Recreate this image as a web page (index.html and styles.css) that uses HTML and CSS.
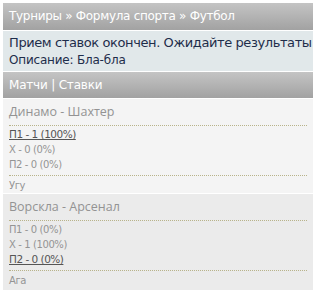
FILE: index.html
```html
<!DOCTYPE html>
<html>

<head>
    <link rel="stylesheet" href="styles.css">
</head>

<body>
    <div class="page">
        <div class="bar crumbs">Турниры &raquo; Формула спорта &raquo; Футбол</div>

        <div class="info">
            <div class="status">Прием ставок окончен. Ожидайте результаты</div>
            <div class="desc">Описание: Бла-бла</div>
        </div>

        <div class="bar tabs">Матчи | Ставки</div>

        <div class="match">
            <div class="match-title">Динамо - Шахтер</div>
            <div class="outcomes">
                <div class="outcome chosen">П1 - 1 (100%)</div>
                <div class="outcome">Х - 0 (0%)</div>
                <div class="outcome">П2 - 0 (0%)</div>
            </div>
            <div class="note">Угу</div>
        </div>

        <div class="match alt">
            <div class="match-title">Ворскла - Арсенал</div>
            <div class="outcomes">
                <div class="outcome">П1 - 0 (0%)</div>
                <div class="outcome">Х - 1 (100%)</div>
                <div class="outcome chosen">П2 - 0 (0%)</div>
            </div>
            <div class="note">Ага</div>
        </div>
    </div>
</body>

</html>
```

FILE: styles.css
```css
body {
    margin: 0;
    padding: 3px 0 0 3px;
    background-color: #fff;
    font-family: "DejaVu Sans", Verdana, sans-serif;
}

.bar {
    color: #fff;
    background: linear-gradient(#c4c4c4, #a2a2a2);
    padding: 0 6px;
}

.crumbs {
    height: 27px;
    line-height: 27px;
    font-size: 12px;
    letter-spacing: -0.3px;
}

.tabs {
    height: 26px;
    line-height: 27px;
    font-size: 12px;
    letter-spacing: -0.2px;
    border-top: 1px solid #fff;
}

.info {
    background-color: #e1e8ea;
    border-top: 1px solid #fff;
    padding: 2px 6px;
    color: #1e2d4a;
}

.status {
    font-size: 13px;
    line-height: 19px;
    letter-spacing: -0.4px;
    white-space: nowrap;
}

.desc {
    font-size: 12px;
    line-height: 17px;
    letter-spacing: -0.2px;
}

.match {
    background-color: #f4f4f4;
    border-top: 1px solid #fff;
    padding: 3px 6px 0;
}

.match.alt {
    background-color: #ebebeb;
    padding-bottom: 2px;
}

.match-title {
    font-family: "Open Sans", sans-serif;
    font-size: 12.5px;
    color: #939393;
    line-height: 20px;
    padding-bottom: 3px;
    border-bottom: 1px dotted #b8b38a;
}

.outcomes {
    padding: 1px 0 3px;
    border-bottom: 1px dotted #b8b38a;
}

.outcome {
    font-size: 10px;
    line-height: 15px;
    letter-spacing: -0.4px;
    color: #949494;
}

.outcome.chosen {
    font-size: 10.5px;
    letter-spacing: -0.5px;
    color: #555;
    text-decoration: underline;
}

.note {
    font-size: 10px;
    line-height: 14px;
    letter-spacing: -0.4px;
    color: #949494;
    padding-top: 3px;
}
```
